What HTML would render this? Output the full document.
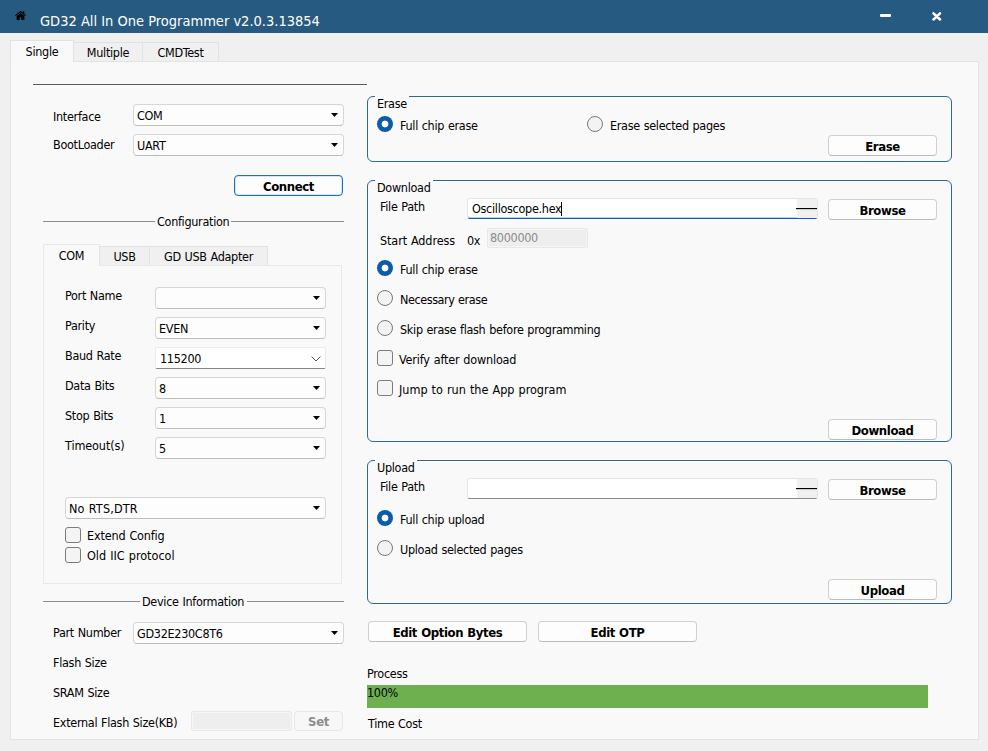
<!DOCTYPE html>
<html lang="en">
<head>
<meta charset="utf-8">
<title>GD32 All In One Programmer</title>
<style>
*{box-sizing:border-box;margin:0;padding:0}
html,body{width:988px;height:751px;overflow:hidden;background:#f0f0f0}
body{position:relative;font-family:"DejaVu Sans Condensed","DejaVu Sans","Liberation Sans",sans-serif;font-stretch:condensed;font-size:12.5px;letter-spacing:-0.3px;word-spacing:0.5px;color:#000}
.abs,.lbl,.combo,.btn,.grp,.radio,.chk,.inp,.tab,.line{position:absolute}
#titlebar{position:absolute;left:0;top:0;width:988px;height:33px;background:#275a80}
#title{position:absolute;left:40px;top:11px;font-size:14.5px;letter-spacing:0;word-spacing:0;color:#fff;line-height:20px;white-space:nowrap}
.lbl{white-space:nowrap;line-height:16px;height:16px}
.tab{background:#f0f0f0;border:1px solid #e2e2e2;border-bottom:none;text-align:center;white-space:nowrap}
.tab.sel{background:#f9f9f9;border-color:#e2e2e2}
.pane{position:absolute;background:#f9f9f9;border:1px solid #e3e3e3}
.combo{height:22px;background:#fdfdfd;border:1px solid #d6d6d6;border-bottom-color:#bdbdbd;border-radius:4px;line-height:21px;padding-left:3px;white-space:nowrap}
.combo:after{content:"";position:absolute;right:5px;top:8px;width:7px;height:4px;background:#000;clip-path:polygon(0 0,100% 0,50% 100%)}
.combo.edit{border-radius:2px;border-color:#ebebeb;border-bottom-color:#868686;background:#fff}
.combo.edit:after{display:none}
.btn{height:21px;background:#fdfdfd;border:1px solid #d0d0d0;border-bottom-color:#bcbcbc;border-radius:4px;font-weight:bold;text-align:center;line-height:21px;font-size:13px;letter-spacing:-0.4px;white-space:nowrap}
.btn.def{border:1px solid #1c6fc4;box-shadow:inset 0 0 0 0.5px rgba(28,111,196,.35)}
.btn.dis{background:#f7f7f7;color:#8c8c8c;border-color:#e6e6e6}
.line{height:1px;background:#8d8d8d}
.grp{border:1px solid #2e6a95;border-radius:6px}
.gt{position:absolute;left:7px;top:-1px;background:#f9f9f9;padding:0 2px;line-height:16px;height:14px;white-space:nowrap}
.radio{width:16px;height:16px;border-radius:50%;border:1px solid #787878;background:#f3f3f3}
.radio.on{border:none;background:radial-gradient(circle at 50% 50%,#fff 0,#fff 2.9px,#0c5caa 3.8px)}
.chk{width:16px;height:16px;border-radius:3px;border:1px solid #7c7c7c;background:#f4f4f4}
.inp{height:21px;background:#fff;border:1px solid #e5e5e5;border-bottom:1px solid #8a8a8a;border-radius:3px;line-height:19px;padding-left:4px;white-space:nowrap}
.inp.focus{border-bottom:1px solid #0f5fb8;box-shadow:inset 0 -1px 0 rgba(15,95,184,.3)}
.inp.dis{background:#eee;border:1px solid #e8e8e8;box-shadow:inset 0 0 0 1px #f6f6f6;color:#8c8c8c;border-radius:2px}
.mini{position:absolute;right:0;top:0;width:20px;height:19px;background:#f0f0f0}
.mini:after{content:"";position:absolute;left:-1px;right:0;top:9px;height:1px;background:#000;box-shadow:0 0.5px 0 rgba(0,0,0,.3)}
</style>
</head>
<body>
<div id="titlebar">
<svg class="abs" style="left:15px;top:11px" width="11" height="9" viewBox="0 0 11 9"><path d="M0.4 4.7 L5.5 0.5 L10.6 4.7" fill="none" stroke="#000" stroke-width="1.1"/><path d="M5.5 1.9 L1.6 5.1 V9 H4.7 V6.3 H6.3 V9 H9.4 V5.1 Z M7.7 0.2 H9.3 V3.2 L7.7 1.9 Z" fill="#000"/></svg>
<div id="title">GD32 All In One Programmer v2.0.3.13854</div>
<div class="abs" style="left:880px;top:14px;width:11px;height:3px;background:#fff;border-radius:1px"></div>
<svg class="abs" style="left:932px;top:12px" width="10" height="9" viewBox="0 0 10 9"><path d="M1.5 1.3 L8 7.5 M8 1.3 L1.5 7.5" stroke="#fff" stroke-width="2.5" stroke-linecap="round"/></svg>
</div>

<!-- main tabs -->
<div class="pane" style="left:10px;top:61px;width:969px;height:679px"></div>
<div class="tab sel" style="left:10px;top:40px;width:64px;height:22px;line-height:22px">Single</div>
<div class="tab" style="left:73px;top:42px;width:70px;height:19px;line-height:20px">Multiple</div>
<div class="tab" style="left:142px;top:42px;width:77px;height:19px;line-height:20px">CMDTest</div>

<div class="line" style="left:33px;top:84px;width:334px;background:#5a5a5a"></div>

<!-- left column -->
<div class="lbl" style="left:53px;top:109px">Interface</div>
<div class="combo" style="left:133px;top:104px;width:211px">COM</div>
<div class="lbl" style="left:53px;top:137px">BootLoader</div>
<div class="combo" style="left:133px;top:134px;width:211px">UART</div>
<div class="btn def" style="left:234px;top:175px;width:109px">Connect</div>

<div class="line" style="left:43px;top:221px;width:112px"></div>
<div class="lbl" style="left:157px;top:214px">Configuration</div>
<div class="line" style="left:231px;top:221px;width:113px"></div>

<div class="pane" style="left:43px;top:265px;width:299px;height:319px;border-color:#e9e9e9"></div>
<div class="tab sel" style="left:43px;top:244px;width:57px;height:22px;line-height:22px;border-color:#e9e9e9">COM</div>
<div class="tab" style="left:99px;top:246px;width:51px;height:19px;line-height:20px">USB</div>
<div class="tab" style="left:149px;top:246px;width:119px;height:19px;line-height:20px">GD USB Adapter</div>

<div class="lbl" style="left:65px;top:288px">Port Name</div>
<div class="combo" style="left:155px;top:287px;width:171px"></div>
<div class="lbl" style="left:65px;top:318px">Parity</div>
<div class="combo" style="left:155px;top:317px;width:171px">EVEN</div>
<div class="lbl" style="left:65px;top:348px">Baud Rate</div>
<div class="combo edit" style="left:155px;top:347px;width:171px;padding-left:4px">115200<svg class="abs" style="right:4px;top:7.5px" width="10" height="6" viewBox="0 0 10 6"><path d="M0.6 0.6 L5 5 L9.4 0.6" fill="none" stroke="#505050" stroke-width="1"/></svg></div>
<div class="lbl" style="left:65px;top:378px">Data Bits</div>
<div class="combo" style="left:155px;top:377px;width:171px">8</div>
<div class="lbl" style="left:65px;top:408px">Stop Bits</div>
<div class="combo" style="left:155px;top:407px;width:171px">1</div>
<div class="lbl" style="left:65px;top:438px;letter-spacing:-0.1px">Timeout(s)</div>
<div class="combo" style="left:155px;top:437px;width:171px">5</div>
<div class="combo" style="left:65px;top:497px;width:261px;letter-spacing:0.15px">No RTS,DTR</div>
<div class="chk" style="left:65px;top:527px"></div>
<div class="lbl" style="left:87px;top:528px;letter-spacing:-0.15px">Extend Config</div>
<div class="chk" style="left:65px;top:547px"></div>
<div class="lbl" style="left:87px;top:548px;letter-spacing:0px">Old IIC protocol</div>

<div class="line" style="left:43px;top:601px;width:97px"></div>
<div class="lbl" style="left:142px;top:594px">Device Information</div>
<div class="line" style="left:247px;top:601px;width:97px"></div>

<div class="lbl" style="left:53px;top:625px">Part Number</div>
<div class="combo" style="left:133px;top:622px;width:211px">GD32E230C8T6</div>
<div class="lbl" style="left:53px;top:655px">Flash Size</div>
<div class="lbl" style="left:53px;top:685px">SRAM Size</div>
<div class="lbl" style="left:53px;top:715px">External Flash Size(KB)</div>
<div class="inp dis" style="left:191px;top:711px;width:101px;height:20px"></div>
<div class="btn dis" style="left:294px;top:711px;width:49px;height:20px;line-height:19px">Set</div>

<!-- right column -->
<div class="grp" style="left:367px;top:96px;width:585px;height:66px"><div class="gt">Erase</div></div>
<div class="radio on" style="left:377px;top:116px"></div>
<div class="lbl" style="left:400px;top:118px">Full chip erase</div>
<div class="radio" style="left:587px;top:116px"></div>
<div class="lbl" style="left:610px;top:118px">Erase selected pages</div>
<div class="btn" style="left:828px;top:135px;width:109px">Erase</div>

<div class="grp" style="left:367px;top:180px;width:585px;height:262px"><div class="gt">Download</div></div>
<div class="lbl" style="left:380px;top:199px">File Path</div>
<div class="inp focus" style="left:467px;top:198px;width:351px">Oscilloscope.hex<span style="display:inline-block;width:1px;height:14px;background:#000;vertical-align:-3px"></span><div class="mini"></div></div>
<div class="btn" style="left:828px;top:199px;width:109px">Browse</div>
<div class="lbl" style="left:380px;top:233px;letter-spacing:-0.1px">Start Address</div>
<div class="lbl" style="left:467px;top:233px">0x</div>
<div class="inp dis" style="left:487px;top:228px;width:101px;height:20px;line-height:18px;padding-left:2px">8000000</div>
<div class="radio on" style="left:377px;top:260px"></div>
<div class="lbl" style="left:400px;top:262px">Full chip erase</div>
<div class="radio" style="left:377px;top:290px"></div>
<div class="lbl" style="left:400px;top:292px;letter-spacing:-0.43px">Necessary erase</div>
<div class="radio" style="left:377px;top:320px"></div>
<div class="lbl" style="left:400px;top:322px">Skip erase flash before programming</div>
<div class="chk" style="left:377px;top:350px"></div>
<div class="lbl" style="left:399px;top:352px;letter-spacing:-0.17px">Verify after download</div>
<div class="chk" style="left:377px;top:380px"></div>
<div class="lbl" style="left:399px;top:382px;letter-spacing:0">Jump to run the App program</div>
<div class="btn" style="left:828px;top:419px;width:109px">Download</div>

<div class="grp" style="left:367px;top:460px;width:585px;height:144px"><div class="gt">Upload</div></div>
<div class="lbl" style="left:380px;top:479px">File Path</div>
<div class="inp" style="left:467px;top:478px;width:351px"><div class="mini"></div></div>
<div class="btn" style="left:828px;top:479px;width:109px">Browse</div>
<div class="radio on" style="left:377px;top:510px"></div>
<div class="lbl" style="left:400px;top:512px">Full chip upload</div>
<div class="radio" style="left:377px;top:540px"></div>
<div class="lbl" style="left:400px;top:542px">Upload selected pages</div>
<div class="btn" style="left:828px;top:579px;width:109px">Upload</div>

<div class="btn" style="left:368px;top:621px;width:159px">Edit Option Bytes</div>
<div class="btn" style="left:538px;top:621px;width:159px">Edit OTP</div>

<div class="lbl" style="left:367px;top:666px">Process</div>
<div class="abs" style="left:367px;top:685px;width:561px;height:23px;background:#6eb04f"></div>
<div class="lbl" style="left:367px;top:685px">100%</div>
<div class="lbl" style="left:368px;top:716px">Time Cost</div>
</body>
</html>
